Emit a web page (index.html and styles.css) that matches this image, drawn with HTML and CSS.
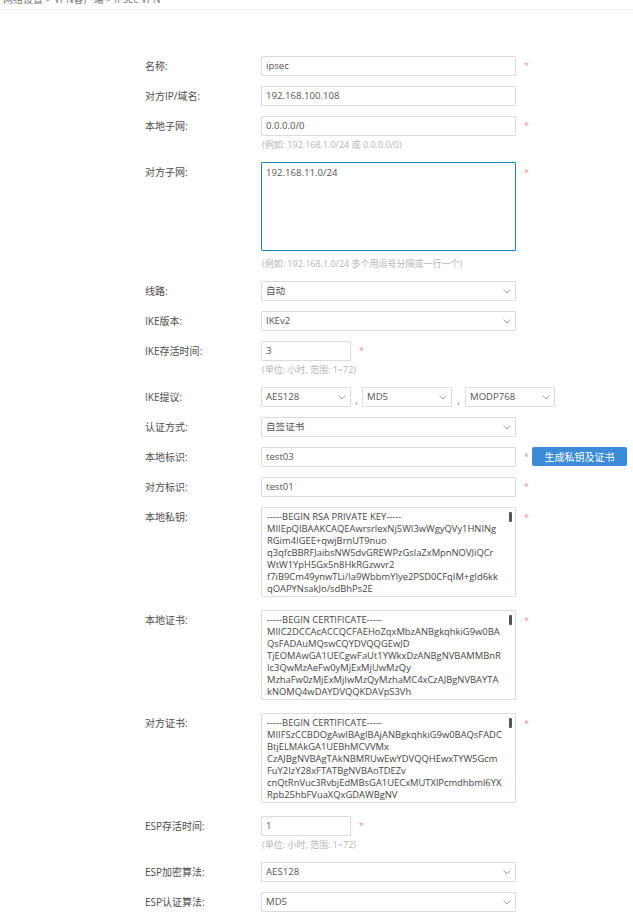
FILE: index.html
```html
<!DOCTYPE html>
<html lang="zh">
<head>
<meta charset="utf-8">
<link rel="stylesheet" href="styles.css">
</head>
<body>
<div class="crumb">网络设置 &gt; VPN客户端 &gt; IPsec VPN</div>
<form class="form">
  <div class="row">
    <label class="lbl">名称:</label>
    <div class="field"><div class="inp wide">ipsec</div><span class="req">*</span></div>
  </div>
  <div class="row">
    <label class="lbl">对方IP/域名:</label>
    <div class="field"><div class="inp wide">192.168.100.108</div></div>
  </div>
  <div class="row">
    <label class="lbl">本地子网:</label>
    <div class="col">
      <div class="field"><div class="inp wide">0.0.0.0/0</div><span class="req">*</span></div>
      <div class="hint">(例如: 192.168.1.0/24 或 0.0.0.0/0)</div>
    </div>
  </div>
  <div class="row">
    <label class="lbl">对方子网:</label>
    <div class="col">
      <div class="field top"><div class="ta focus short">192.168.11.0/24</div><span class="req">*</span></div>
      <div class="hint after-ta">(例如: 192.168.1.0/24 多个用逗号分隔或一行一个)</div>
    </div>
  </div>
  <div class="row">
    <label class="lbl">线路:</label>
    <div class="field"><div class="sel wide"><span>自动</span><svg class="chev" viewBox="0 0 8 5" width="8" height="5"><polyline points="0.5,0.5 4,4 7.5,0.5"/></svg></div></div>
  </div>
  <div class="row">
    <label class="lbl">IKE版本:</label>
    <div class="field"><div class="sel wide"><span>IKEv2</span><svg class="chev" viewBox="0 0 8 5" width="8" height="5"><polyline points="0.5,0.5 4,4 7.5,0.5"/></svg></div></div>
  </div>
  <div class="row">
    <label class="lbl">IKE存活时间:</label>
    <div class="col">
      <div class="field"><div class="inp small">3</div><span class="req">*</span></div>
      <div class="hint">(单位: 小时, 范围: 1~72)</div>
    </div>
  </div>
  <div class="row">
    <label class="lbl">IKE提议:</label>
    <div class="field">
      <div class="sel small"><span>AES128</span><svg class="chev" viewBox="0 0 8 5" width="8" height="5"><polyline points="0.5,0.5 4,4 7.5,0.5"/></svg></div>
      <span class="sep">,</span>
      <div class="sel small"><span>MD5</span><svg class="chev" viewBox="0 0 8 5" width="8" height="5"><polyline points="0.5,0.5 4,4 7.5,0.5"/></svg></div>
      <span class="sep sep2">,</span>
      <div class="sel small"><span>MODP768</span><svg class="chev" viewBox="0 0 8 5" width="8" height="5"><polyline points="0.5,0.5 4,4 7.5,0.5"/></svg></div>
    </div>
  </div>
  <div class="row">
    <label class="lbl">认证方式:</label>
    <div class="field"><div class="sel wide"><span>自签证书</span><svg class="chev" viewBox="0 0 8 5" width="8" height="5"><polyline points="0.5,0.5 4,4 7.5,0.5"/></svg></div></div>
  </div>
  <div class="row">
    <label class="lbl">本地标识:</label>
    <div class="field"><div class="inp wide">test03</div><span class="req">*</span><button type="button" class="btn">生成私钥及证书</button></div>
  </div>
  <div class="row">
    <label class="lbl">对方标识:</label>
    <div class="field"><div class="inp wide">test01</div><span class="req">*</span></div>
  </div>
  <div class="row ta-row">
    <label class="lbl">本地私钥:</label>
    <div class="field top"><div class="ta">-----BEGIN RSA PRIVATE KEY-----
MIIEpQIBAAKCAQEAwrsrlexNj5WI3wWgyQVy1HNINg
RGim4IGEE+qwjBrnUT9nuo
q3qfcBBRFJaibsNW5dvGREWPzGslaZxMpnNOVJiQCr
WtW1YpH5Gx5n8HkRGzwvr2
f7iB9Cm49ynwTLi/Ia9WbbmYIye2PSD0CFqIM+gId6kk
qOAPYNsakJo/sdBhPs2E<i class="thumb"></i></div><span class="req">*</span></div>
  </div>
  <div class="row ta-row">
    <label class="lbl">本地证书:</label>
    <div class="field top"><div class="ta">-----BEGIN CERTIFICATE-----
MIIC2DCCAcACCQCFAEHoZqxMbzANBgkqhkiG9w0BA
QsFADAuMQswCQYDVQQGEwJD
TjEOMAwGA1UECgwFaUt1YWkxDzANBgNVBAMMBnR
Ic3QwMzAeFw0yMjExMjUwMzQy
MzhaFw0zMjExMjIwMzQyMzhaMC4xCzAJBgNVBAYTA
kNOMQ4wDAYDVQQKDAVpS3Vh<i class="thumb"></i></div><span class="req">*</span></div>
  </div>
  <div class="row ta-row">
    <label class="lbl">对方证书:</label>
    <div class="field top"><div class="ta">-----BEGIN CERTIFICATE-----
MIIFSzCCBDOgAwIBAgIBAjANBgkqhkiG9w0BAQsFADC
BtjELMAkGA1UEBhMCVVMx
CzAJBgNVBAgTAkNBMRUwEwYDVQQHEwxTYW5Gcm
FuY2IzY28xFTATBgNVBAoTDEZv
cnQtRnVuc3RvbjEdMBsGA1UECxMUTXlPcmdhbml6YX
Rpb25hbFVuaXQxGDAWBgNV<i class="thumb"></i></div><span class="req">*</span></div>
  </div>
  <div class="row">
    <label class="lbl">ESP存活时间:</label>
    <div class="col">
      <div class="field"><div class="inp small">1</div><span class="req">*</span></div>
      <div class="hint">(单位: 小时, 范围: 1~72)</div>
    </div>
  </div>
  <div class="row">
    <label class="lbl">ESP加密算法:</label>
    <div class="field"><div class="sel wide"><span>AES128</span><svg class="chev" viewBox="0 0 8 5" width="8" height="5"><polyline points="0.5,0.5 4,4 7.5,0.5"/></svg></div></div>
  </div>
  <div class="row">
    <label class="lbl">ESP认证算法:</label>
    <div class="field"><div class="sel wide"><span>MD5</span><svg class="chev" viewBox="0 0 8 5" width="8" height="5"><polyline points="0.5,0.5 4,4 7.5,0.5"/></svg></div></div>
  </div>
</form>
</body>
</html>
```

FILE: styles.css
```css
html, body {
  margin: 0;
  padding: 0;
  background: #fff;
  overflow: hidden;
}
body {
  font-family: "Open Sans", "Noto Sans CJK SC", sans-serif;
  color: #4a4a4a;
}
.crumb {
  margin-top: -8px;
  height: 18px;
  line-height: 14px;
  padding-left: 3px;
  font-size: 10px;
  color: #7a7a7a;
  border-bottom: 1px solid #ececec;
  box-sizing: border-box;
}
.form {
  display: flex;
  flex-direction: column;
  gap: 10px;
  padding: 46px 0 0 145px;
  margin: 0;
}
.row {
  display: grid;
  grid-template-columns: 116px auto;
  align-items: start;
}
.ta-row {
  margin-bottom: 3px;
}
.lbl {
  font-size: 10px;
  line-height: 20px;
  color: #4d4d4d;
  white-space: nowrap;
}
.col {
  display: flex;
  flex-direction: column;
}
.field {
  display: flex;
  align-items: center;
  height: 20px;
}
.field.top {
  align-items: flex-start;
  height: auto;
}
.inp, .sel {
  box-sizing: border-box;
  height: 20px;
  border: 1px solid #dcdcdc;
  background: #fff;
  font-size: 9.6px;
  line-height: 18px;
  padding: 0 4px 0 4px;
  color: #555;
  border-radius: 1px;
}
.wide { width: 255px; }
.small { width: 90px; }
.sel {
  display: flex;
  align-items: center;
  justify-content: space-between;
}
.chev {
  fill: none;
  stroke: #9a9a9a;
  stroke-width: 0.9;
}
.sep {
  width: 11px;
  text-align: center;
  font-size: 10px;
  color: #888;
  padding-top: 5px;
}
.sep2 { width: 13px; }
.req {
  margin-left: 8px;
  font-size: 9px;
  color: #f28b8b;
  line-height: 10px;
}
.field.top .req {
  margin-top: 6px;
}
.hint {
  margin-top: 2px;
  font-size: 9px;
  line-height: 14px;
  color: #b5b5b5;
  padding-left: 1px;
}
.hint.after-ta {
  margin-top: 6px;
}
.ta {
  position: relative;
  box-sizing: border-box;
  width: 255px;
  height: 90px;
  border: 1px solid #dcdcdc;
  border-radius: 1px;
  padding: 3px 5px 0 5px;
  font-size: 9.4px;
  line-height: 12px;
  white-space: pre;
  overflow: hidden;
  color: #454545;
}
.ta.focus {
  border-color: #1b86c6;
  height: 89px;
  padding-left: 4px;
  padding-top: 4px;
  font-size: 9.6px;
  color: #555;
}
.thumb {
  position: absolute;
  right: 3px;
  top: 4px;
  width: 3px;
  height: 10px;
  border-radius: 1px;
  background: #555;
}
.btn {
  margin-left: 3px;
  width: 95px;
  height: 19px;
  margin-top: -1px;
  border: none;
  border-radius: 2px;
  background: #3b8bd9;
  color: #fff;
  font-family: "Open Sans", "Noto Sans CJK SC", sans-serif;
  font-size: 10px;
  padding: 0;
}
```
